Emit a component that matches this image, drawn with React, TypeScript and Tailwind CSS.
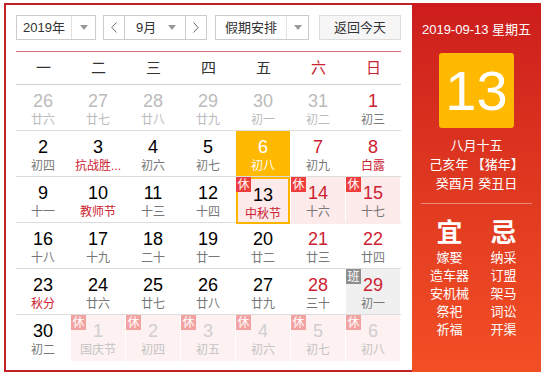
type Cell = {
  d: number;
  l: string;
  other?: boolean;
  fest?: boolean;
  badge?: "休" | "班";
  today?: boolean;
  sel?: boolean;
};

const weekdays = ["一", "二", "三", "四", "五", "六", "日"];

const rows: Cell[][] = [
  [
    { d: 26, l: "廿六", other: true },
    { d: 27, l: "廿七", other: true },
    { d: 28, l: "廿八", other: true },
    { d: 29, l: "廿九", other: true },
    { d: 30, l: "初一", other: true },
    { d: 31, l: "初二", other: true },
    { d: 1, l: "初三" },
  ],
  [
    { d: 2, l: "初四" },
    { d: 3, l: "抗战胜...", fest: true },
    { d: 4, l: "初六" },
    { d: 5, l: "初七" },
    { d: 6, l: "初八", today: true },
    { d: 7, l: "初九" },
    { d: 8, l: "白露", fest: true },
  ],
  [
    { d: 9, l: "十一" },
    { d: 10, l: "教师节", fest: true },
    { d: 11, l: "十三" },
    { d: 12, l: "十四" },
    { d: 13, l: "中秋节", fest: true, badge: "休", sel: true },
    { d: 14, l: "十六", badge: "休" },
    { d: 15, l: "十七", badge: "休" },
  ],
  [
    { d: 16, l: "十八" },
    { d: 17, l: "十九" },
    { d: 18, l: "二十" },
    { d: 19, l: "廿一" },
    { d: 20, l: "廿二" },
    { d: 21, l: "廿三" },
    { d: 22, l: "廿四" },
  ],
  [
    { d: 23, l: "秋分", fest: true },
    { d: 24, l: "廿六" },
    { d: 25, l: "廿七" },
    { d: 26, l: "廿八" },
    { d: 27, l: "廿九" },
    { d: 28, l: "三十" },
    { d: 29, l: "初一", badge: "班" },
  ],
  [
    { d: 30, l: "初二" },
    { d: 1, l: "国庆节", other: true, badge: "休" },
    { d: 2, l: "初四", other: true, badge: "休" },
    { d: 3, l: "初五", other: true, badge: "休" },
    { d: 4, l: "初六", other: true, badge: "休" },
    { d: 5, l: "初七", other: true, badge: "休" },
    { d: 6, l: "初八", other: true, badge: "休" },
  ],
];

const yi = ["嫁娶", "造车器", "安机械", "祭祀", "祈福"];
const ji = ["纳采", "订盟", "架马", "词讼", "开渠"];

function Arrow() {
  return (
    <svg width="8" height="5" viewBox="0 0 8 5">
      <path d="M0 0h8L4 5z" fill="#999" />
    </svg>
  );
}

function Chevron({ left }: { left?: boolean }) {
  return (
    <svg width="6" height="11" viewBox="0 0 6 11">
      <path
        d={left ? "M5.5 0.5L0.8 5.5l4.7 5" : "M0.5 0.5l4.7 5-4.7 5"}
        fill="none"
        stroke="#666"
        strokeWidth="1"
      />
    </svg>
  );
}

function DayCell({ c, col }: { c: Cell; col: number }) {
  const weekend = col >= 5;
  let bg = "";
  if (c.today) bg = "bg-[#ffb900]";
  else if (c.badge === "班") bg = "bg-[#f0f0f0]";
  else if (c.badge === "休" && c.other) bg = "bg-[#fdf1f1]";
  else if (c.badge === "休") bg = "bg-[#fdeaea]";

  let num = "text-black";
  let lun = "text-[#777]";
  if (c.today) {
    num = "text-white";
    lun = "text-white";
  } else if (c.other && c.badge) {
    num = "text-[#cfcfcf]";
    lun = "text-[#c4c4c4]";
  } else if (c.other) {
    num = "text-[#bbb]";
    lun = "text-[#bbb]";
  } else {
    if (weekend) num = "text-[#cc2230]";
    if (c.fest) lun = "text-[#cc2230]";
  }

  let badgeBg = "bg-[#ee3d3d]";
  if (c.badge === "班") badgeBg = "bg-[#8e8e8e]";
  else if (c.other) badgeBg = "bg-[#f3a2a2]";

  return (
    <div className="h-full pr-[1px]">
      <div
        className={`relative flex h-full flex-col items-center pt-[6px] ${bg} ${
          c.sel ? "border-2 border-[#ffb400] pt-[4px]" : ""
        }`}
      >
        {c.badge && (
          <div
            className={`absolute ${c.sel ? "-left-[2px] -top-[2px]" : "left-0 top-0"} flex h-[15px] w-[15px] items-center justify-center text-[12px] leading-none text-white ${badgeBg}`}
          >
            {c.badge}
          </div>
        )}
        <div className={`text-[18px] leading-[20px] ${num}`}>{c.d}</div>
        <div className={`mt-[1px] text-[12px] leading-[16px] ${lun}`}>{c.l}</div>
      </div>
    </div>
  );
}

export default function App() {
  return (
    <div className="h-[376px] w-[547px] bg-white pl-[4px] pt-[3px] font-['Liberation_Sans','Noto_Sans_CJK_SC',sans-serif]">
      <div className="flex h-[369px]">
        {/* calendar */}
        <div className="h-full w-[408px] border-b-2 border-l-2 border-t-2 border-[#bf2127] pl-[10px] pt-[10px]">
          <div className="flex h-[25px] text-[13px] text-[#333]">
            <div className="flex w-[80px] border border-[#ccc]">
              <div className="flex w-[55px] items-center justify-center border-r border-[#e2e2e2]">2019年</div>
              <div className="flex flex-1 items-center justify-center">
                <Arrow />
              </div>
            </div>
            <div className="ml-[7px] flex w-[104px] border border-[#ccc]">
              <div className="flex w-[21px] items-center justify-center border-r border-[#ccc]">
                <Chevron left />
              </div>
              <div className="flex w-[60px] items-center justify-between pl-[11px] pr-[9px]">
                <span>9月</span>
                <Arrow />
              </div>
              <div className="flex flex-1 items-center justify-center border-l border-[#ccc]">
                <Chevron />
              </div>
            </div>
            <div className="ml-[8px] flex w-[94px] border border-[#ccc]">
              <div className="flex w-[71px] items-center justify-center border-r border-[#e2e2e2]">假期安排</div>
              <div className="flex flex-1 items-center justify-center">
                <Arrow />
              </div>
            </div>
            <div className="ml-[10px] flex w-[82px] items-center justify-center border border-[#ddd] bg-[#f6f6f6]">
              返回今天
            </div>
          </div>

          <div className="mt-[11px] h-px w-[385px] bg-[#d96a6e]" />

          <div className="grid h-[33px] w-[385px] grid-cols-7 border-b border-[#d0d0d0]">
            {weekdays.map((w, i) => (
              <div
                key={w}
                className={`flex items-center justify-center text-[15px] ${i >= 5 ? "text-[#cc2230]" : "text-[#333]"}`}
              >
                {w}
              </div>
            ))}
          </div>

          {rows.map((r, ri) => (
            <div
              key={ri}
              className={`grid h-[46px] w-[385px] grid-cols-7 ${ri < rows.length - 1 ? "border-b border-[#dcdcdc]" : ""}`}
            >
              {r.map((c, ci) => (
                <DayCell key={ci} c={c} col={ci} />
              ))}
            </div>
          ))}
        </div>

        {/* side panel */}
        <div className="flex h-full w-[129px] flex-col items-center bg-linear-to-b from-[#cc1c1c] to-[#f24f25] pt-[17px] text-white">
          <div className="text-[13px] leading-[20px]">2019-09-13 星期五</div>
          <div className="mt-[13px] flex h-[75px] w-[75px] items-center justify-center rounded-[3px] bg-[#ffb900] text-[56px] leading-none">
            13
          </div>
          <div className="mt-[8px] flex flex-col items-center text-[13px] leading-[19px]">
            <div>八月十五</div>
            <div>己亥年 【猪年】</div>
            <div>癸酉月 癸丑日</div>
          </div>
          <div className="mt-[10px] h-px w-[111px] bg-[#f0857c]" />
          <div className="mt-[14px] grid w-[108px] grid-cols-2">
            <div className="flex flex-col items-center">
              <div className="text-[26px] font-bold leading-[30px]">宜</div>
              <div className="mt-[1px] flex flex-col items-center text-[13px] leading-[18px]">
                {yi.map((t) => (
                  <div key={t}>{t}</div>
                ))}
              </div>
            </div>
            <div className="flex flex-col items-center">
              <div className="text-[26px] font-bold leading-[30px]">忌</div>
              <div className="mt-[1px] flex flex-col items-center text-[13px] leading-[18px]">
                {ji.map((t) => (
                  <div key={t}>{t}</div>
                ))}
              </div>
            </div>
          </div>
        </div>
      </div>
    </div>
  );
}
